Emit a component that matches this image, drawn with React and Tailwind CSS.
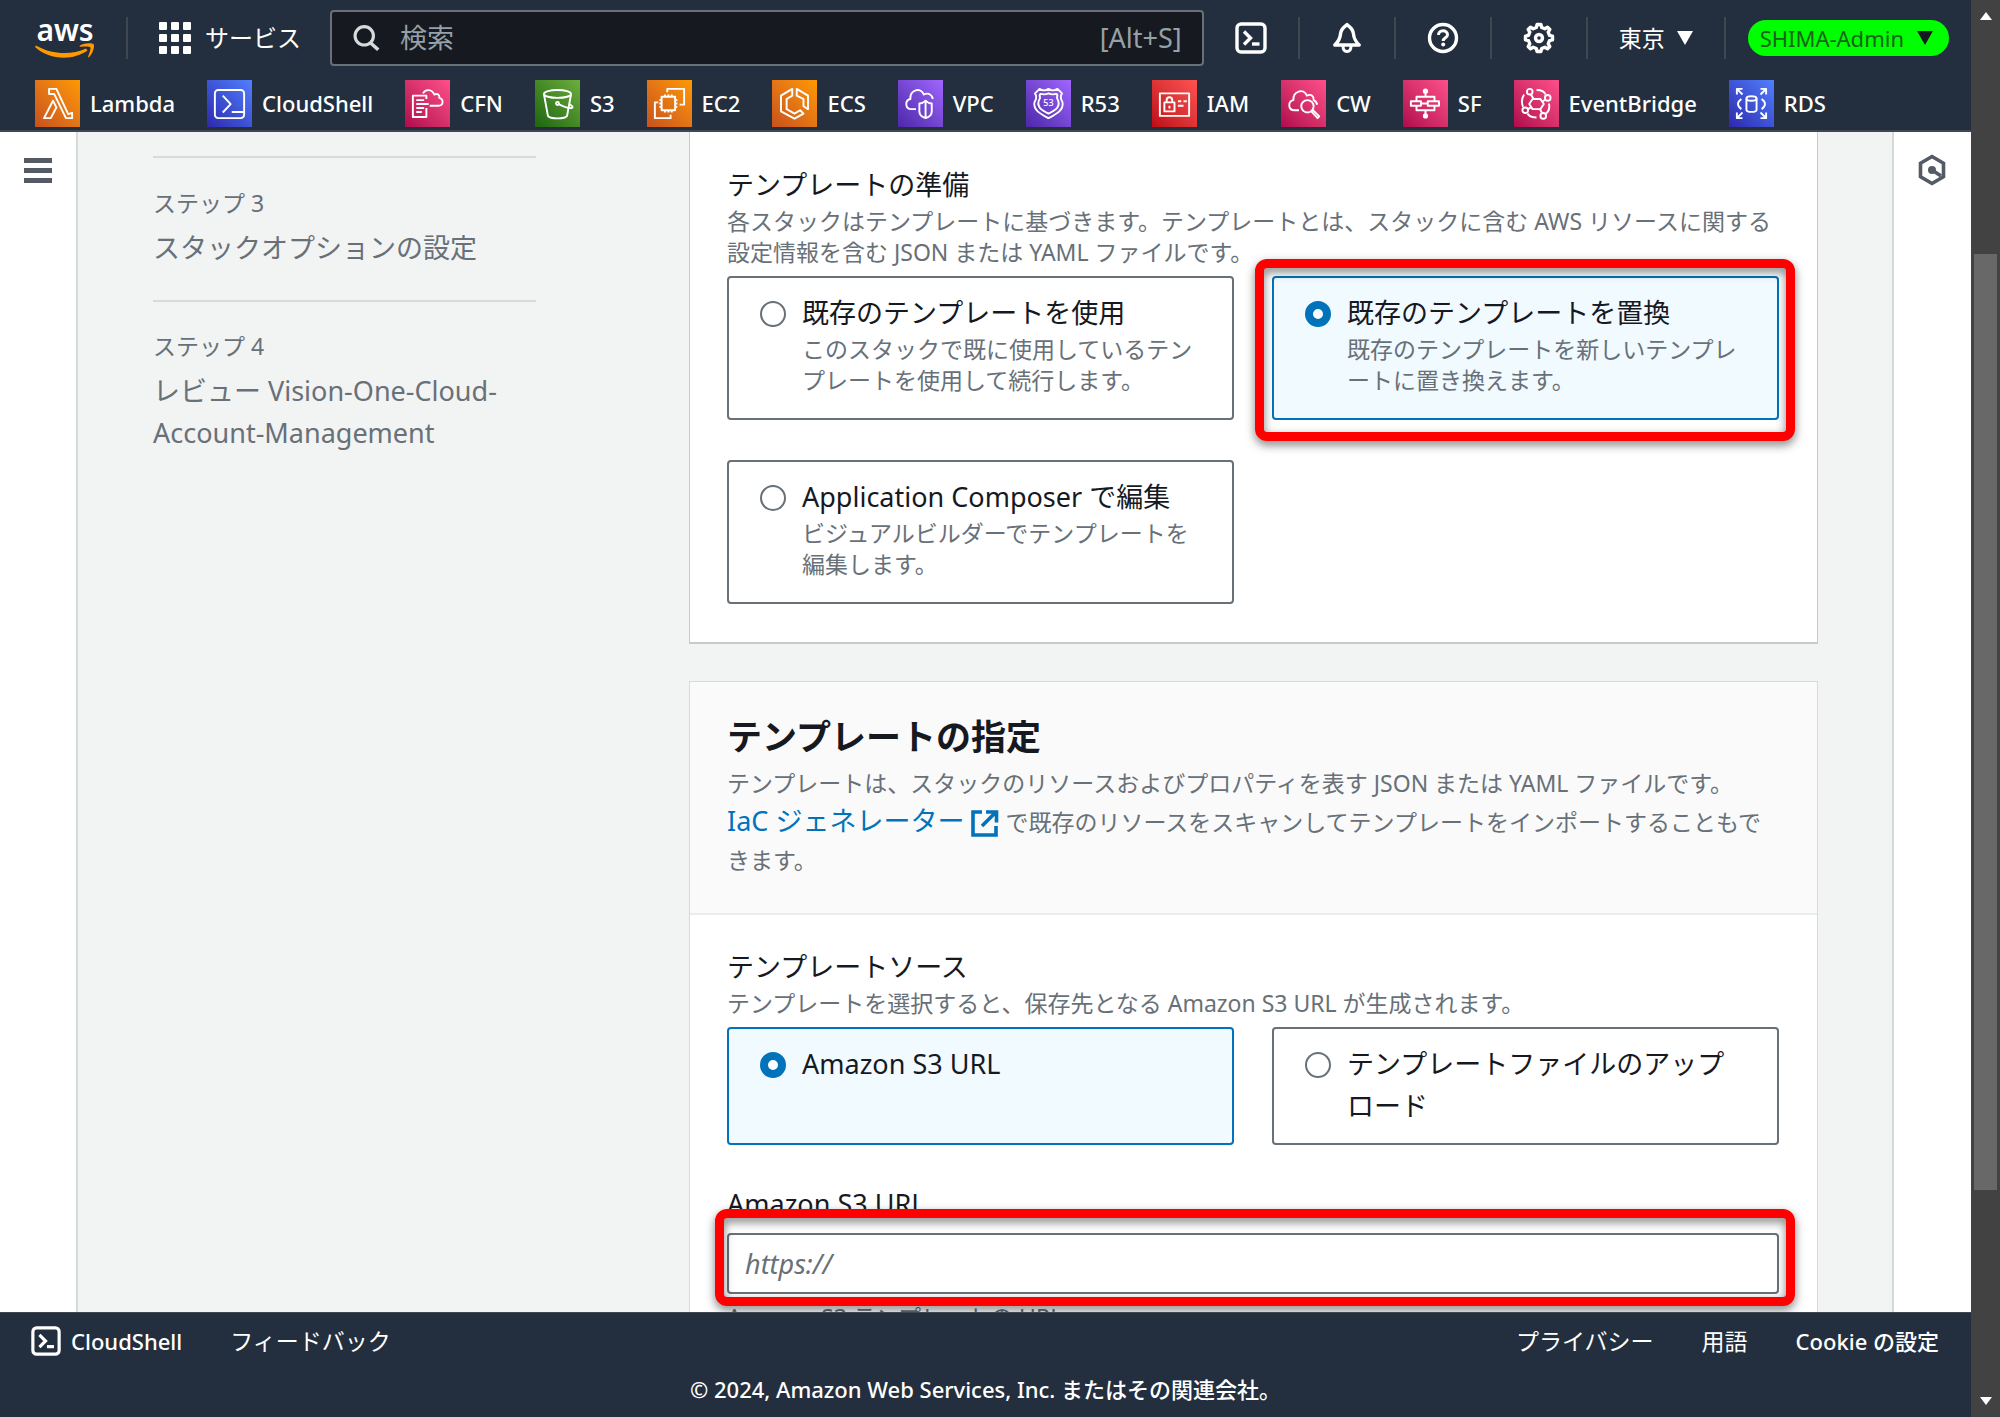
import React from "react";

const SvgIcon = ({ className, size = 16, children }) => (
  <svg
    viewBox={`0 0 ${size} ${size}`}
    className={className}
    fill="none"
    stroke="currentColor"
    aria-hidden="true"
  >
    {children}
  </svg>
);

const ShellIcon = ({ className }) => (
  <SvgIcon className={className} size={32}>
    <rect x="2" y="2" width="28" height="28" rx="4" strokeWidth="3.4" />
    <path d="M9 9.5l6.5 6.5L9 22.5" strokeWidth="3.4" />
    <path d="M17 22h7.5" strokeWidth="3.4" />
  </SvgIcon>
);

const BellIcon = () => (
  <SvgIcon className="w-8 h-8" size={32}>
    <path
      d="M16 2.5C14.5 4.5 10 6 9.5 12c-.3 4.500-1.500 7-5.700 11h24.400c-4.200-4-5.400-6.500-5.700-11C22 6 17.500 4.500 16 2.500z"
      strokeWidth="3.4"
      strokeLinejoin="round"
    />
    <path d="M12 24c0 3.500 1.500 5.500 4 5.500s4-2 4-5.500" strokeWidth="3" />
  </SvgIcon>
);

const HelpIcon = () => (
  <SvgIcon className="w-8 h-8" size={32}>
    <circle cx="16" cy="16" r="13.500" strokeWidth="3.4" />
    <path
      d="M11.500 13c0-2.700 2-4.300 4.500-4.300s4.500 1.600 4.500 4c0 3.300-4.300 3-4.300 6.300"
      strokeWidth="3"
    />
    <circle cx="16.200" cy="22.500" r="2" fill="currentColor" stroke="none" />
  </SvgIcon>
);

const GearIcon = () => (
  <SvgIcon className="w-8 h-8" size={32}>
    <path
      d="M13.300 5.500l.8-3h3.800l.8 3 3.100 1.300 2.700-1.600 2.300 2.300-1.600 2.700 1.300 3.100 3 .8v3.800l-3 .8-1.300 3.100 1.600 2.700-2.300 2.300-2.700-1.600-3.100 1.300-.8 3h-3.800l-.8-3-3.100-1.300-2.700 1.600-2.300-2.300 1.600-2.700-1.300-3.100-3-.8v-3.800l3-.8 1.300-3.100-1.600-2.700 2.300-2.300 2.700 1.600z"
      strokeWidth="3.4"
      strokeLinejoin="round"
    />
    <circle cx="16" cy="16" r="3.500" strokeWidth="3.4" />
  </SvgIcon>
);

const SearchIcon = () => (
  <SvgIcon className="w-7 h-8 shrink-0 text-[#d5dbdb]" size={32}>
    <circle cx="14" cy="13.500" r="10.500" strokeWidth="3.600" />
    <path d="M21 21.500l9 8" strokeWidth="4" />
  </SvgIcon>
);

const GridIcon = () => (
  <svg viewBox="0 0 32 32" className="w-8 h-8" fill="currentColor" aria-hidden="true">
    {[0, 12, 24].map((y) =>
      [0, 12, 24].map((x) => (
        <rect key={`${x}-${y}`} x={x} y={y} width="8" height="8" rx="1" />
      ))
    )}
  </svg>
);

const services = [
  {
    label: "Lambda",
    color: "from-[#c8511b] to-[#ff9900]",
    icon: (
      <path d="M14 33H8l8-15.500 3 6zM12.500 7H19l10.500 22.500L33 28.300V33h-5.500L17 11.500h-4.500z" />
    )
  },
  {
    label: "CloudShell",
    color: "from-[#2e27ad] to-[#527fff]",
    icon: (
      <>
        <rect x="7" y="8" width="26" height="25" rx="3" />
        <path d="M14 13l7 7.500-7 7.500M22 27.500h11" />
      </>
    )
  },
  {
    label: "CFN",
    color: "from-[#b0084d] to-[#ff4f8b]",
    icon: (
      <>
        <path d="M19 16V13H7v19h12v-8" />
        <path d="M10 17h7M10 20.500h11M10 24h7M10 27.500h5" />
        <path d="M16 11c2-4 8-4 10 1 3-1 5 0 4.500 3 4 1 4 7-1 7H22" />
      </>
    )
  },
  {
    label: "S3",
    color: "from-[#1b660f] to-[#6cae3e]",
    icon: (
      <>
        <ellipse cx="20" cy="11.500" rx="12" ry="3.500" />
        <path d="M8 12l3.500 19c2 3 15 3 17 0l3.500-19" />
        <circle cx="20" cy="20" r="1.300" />
        <path d="M21 20.500c5 2.500 10 4 12 3.300 1-.7-.5-2-2.500-3.300" />
      </>
    )
  },
  {
    label: "EC2",
    color: "from-[#c8511b] to-[#ff9900]",
    icon: (
      <>
        <rect x="13" y="14" width="12" height="12" />
        <path d="M16 14v-2M19 14v-2M22 14v-2M16 28v-2M19 28v-2M22 28v-2M13 17h-2M13 20h-2M13 23h-2M27 17h-2M27 20h-2M27 23h-2" />
        <path d="M18 10V7h15v14h-4M10 19H7v14h14v-3" />
      </>
    )
  },
  {
    label: "ECS",
    color: "from-[#c8511b] to-[#ff9900]",
    icon: (
      <>
        <path d="M18 7L8 13v14l12 6.500 8-4.500-3-3-5 3-7-4V16l5-3z" />
        <path d="M22 7l10 6v12l-4-2.500V16l-6-3z" />
      </>
    )
  },
  {
    label: "VPC",
    color: "from-[#4d27a8] to-[#a166ff]",
    icon: (
      <>
        <path d="M16 25h-4c-6 0-6-8-1-9-.5-8 9-11 12-4 4-2 7 0 8 4" />
        <path d="M19 20c3 0 4-1 5.500-2.500C26 19 27.500 20 30 20v7c0 3-2.500 5-5.500 6-3-1-5.500-3-5.500-6zM24.500 18v15" />
      </>
    )
  },
  {
    label: "R53",
    color: "from-[#4d27a8] to-[#a166ff]",
    icon: (
      <>
        <path d="M20 7c-3 2-5 2-8 0l-4 4c2 3 1 5-.5 8-1 7 5 10 12.500 14 7.500-4 13.500-7 12.500-14-1.500-3-2.500-5-.5-8l-4-4c-3 2-5 2-8 0z" />
        <path d="M20 11c-2 1-5 1-7 .5-1 .5-1 2-.5 3.500C8 23 14 26 20 29c6-3 12-6 7.500-14 .5-1.500.5-3-.5-3.500-2 .5-5 .5-7-.5z" />
        <text
          x="20"
          y="22.500"
          textAnchor="middle"
          stroke="none"
          fill="currentColor"
          fontSize="8"
          fontFamily="Noto Sans, sans-serif"
        >
          53
        </text>
      </>
    )
  },
  {
    label: "IAM",
    color: "from-[#bd0816] to-[#ff5252]",
    icon: (
      <>
        <rect x="7" y="11" width="26" height="20" />
        <rect x="11" y="19" width="9" height="8" />
        <path d="M13 19v-2c0-3.500 5-3.500 5 0v2M15.500 22v2.500M23 18h3M28 18h3M23 22h5" />
      </>
    )
  },
  {
    label: "CW",
    color: "from-[#b0084d] to-[#ff4f8b]",
    icon: (
      <>
        <path d="M16 26h-4c-6 0-6-8-1-9-.5-8 9-11 12-4 4-2 6.500 1 6 4 2 1 3 2 3 4" />
        <circle cx="23.500" cy="22.500" r="5.500" />
        <path d="M27 27l5.500 6 1.500-1.500-6-6" />
      </>
    )
  },
  {
    label: "SF",
    color: "from-[#b0084d] to-[#ff4f8b]",
    icon: (
      <>
        <circle cx="20" cy="9" r="1.500" fill="currentColor" />
        <circle cx="20" cy="31" r="1.500" fill="currentColor" />
        <rect x="7" y="18" width="9" height="4" />
        <rect x="22" y="18" width="10" height="4" />
        <path d="M20 11v3M12 18v-4h16v4M12 22v4h16v-4M20 26v4M16 20h6" />
      </>
    )
  },
  {
    label: "EventBridge",
    color: "from-[#b0084d] to-[#ff4f8b]",
    icon: (
      <>
        <path d="M16.500 16h7l3 4.500-3 4.500h-7l-3-4.500z" />
        <circle cx="14" cy="9.500" r="2.500" />
        <circle cx="30" cy="15" r="2.500" />
        <circle cx="10" cy="26" r="2.500" />
        <circle cx="26" cy="31" r="2.500" />
        <path d="M15 12l2.500 4M28 16.500L25 18.500M12.500 25l2.500-1.500M25 28.500L23 25M20 8c4 0 7 1 8 4M9 12c-2 3-2.500 7-1 11M12 29c2 3 5 3.500 8 3.500M31 20c1 4 0 7-2.500 9" />
      </>
    )
  },
  {
    label: "RDS",
    color: "from-[#2e27ad] to-[#527fff]",
    icon: (
      <>
        <ellipse cx="20" cy="15.500" rx="4.500" ry="2" />
        <path d="M15.500 15.500v10c0 2.600 9 2.600 9 0v-10" />
        <path d="M7 12V7h5M7 7l5 5M28 7h5v5M33 7l-5 5M7 28v5h5M7 33l5-5M28 33h5v-5M33 33l-5-5" />
        <path d="M11 16c-4 3-4 6 0 9M29 16c4 3 4 6 0 9" />
      </>
    )
  }
];

const Divider = () => <div className="w-[2px] h-[42px] bg-[#414750]" />;

const TopBar = () => (
  <header className="bg-[#232f3e] text-white border-b-2 border-[#414750] shrink-0">
    <div className="flex items-center h-[76px] pl-[35px] pr-[22px]">
      <a href="#home" className="w-[60px] flex flex-col items-center">
        <span className="text-[30px] leading-[26px] font-semibold">aws</span>
        <svg viewBox="0 0 60 16" className="w-[60px] h-4 text-[#ff9900]" fill="currentColor" aria-hidden="true">
          <path d="M1 2.500c16 9.500 36 9.500 50 3l1.500 2C38 18 14 17 0 4z" />
          <path d="M45 2.500c4-2.500 11-2.800 13.500-1.500 1.500 1.800-.5 9.500-4.500 13-1 .7-1.300.2-.8-.8C54.500 10 56 5.500 55.300 4.200c-1-1-5.500-.8-9.500-.4-1 .2-1.500-.6-.8-1.300z" />
        </svg>
      </a>
      <div className="mx-[31px]">
        <Divider />
      </div>
      <button className="flex items-center gap-[14px] text-[24px] leading-8">
        <GridIcon />
        サービス
      </button>
      <label className="ml-[29px] flex-1 h-14 flex items-center gap-5 px-5 rounded-sm border-2 border-[#687078] bg-[#16191f]">
        <SearchIcon />
        <input
          type="search"
          aria-label="検索"
          placeholder="検索"
          className="flex-1 min-w-0 bg-transparent outline-none text-[27px] placeholder:text-[#95a0a8]"
        />
        <span className="text-[27px] text-[#95a0a8]">[Alt+S]</span>
      </label>
      <div className="flex items-center gap-[31px] ml-[31px]">
        <button aria-label="CloudShell">
          <ShellIcon className="w-8 h-8" />
        </button>
        <Divider />
        <button aria-label="通知">
          <BellIcon />
        </button>
        <Divider />
        <button aria-label="ヘルプ">
          <HelpIcon />
        </button>
        <Divider />
        <button aria-label="設定">
          <GearIcon />
        </button>
        <Divider />
        <button className="flex items-center gap-3 text-[23px] leading-8">
          東京
          <svg viewBox="0 0 16 16" className="w-4 h-4" fill="currentColor" aria-hidden="true">
            <path d="M0 1h16L8 15z" />
          </svg>
        </button>
        <Divider />
      </div>
      <button className="flex items-center gap-[13px] ml-[22px] h-9 pl-3 pr-4 rounded-full bg-[#00ff00] text-[#16641a] text-[22px] leading-8">
        SHIMA-Admin
        <svg viewBox="0 0 16 16" className="w-4 h-4 text-[#16191f]" fill="currentColor" aria-hidden="true">
          <path d="M0 1h16L8 15z" />
        </svg>
      </button>
    </div>
    <nav className="flex items-center gap-8 pl-[35px] pt-1 pb-[3px] text-[22px] font-medium">
      {services.map((service) => (
        <a key={service.label} href={`#${service.label}`} className="flex items-center gap-[10px]">
          <span
            className={`w-[45px] h-[47px] flex items-center justify-center bg-gradient-to-tr ${service.color}`}
          >
            <SvgIcon className="w-[45px] h-[47px]" size={40}>
              <g strokeWidth="1.700" strokeLinejoin="round">{service.icon}</g>
            </SvgIcon>
          </span>
          {service.label}
        </a>
      ))}
    </nav>
  </header>
);

const Steps = () => (
  <aside className="w-[383px] shrink-0 pt-6 text-[#687078]">
    <ol>
      <li className="border-t-2 border-[#d5dbdb] pt-[30px] pb-[31px]">
        <div className="text-[23px] leading-[31px]">ステップ 3</div>
        <a href="#options" className="block mt-2 text-[27px] leading-[42px]">
          スタックオプションの設定
        </a>
      </li>
      <li className="border-t-2 border-[#d5dbdb] pt-[29px]">
        <div className="text-[23px] leading-[31px]">ステップ 4</div>
        <a href="#review" className="block mt-2 text-[27px] leading-[42px]">
          レビュー Vision-One-Cloud-
          <br />
          Account-Management
        </a>
      </li>
    </ol>
  </aside>
);

const Tile = ({ name, title, description, checked, highlighted }) => (
  <label
    className={`relative flex gap-4 rounded-sm border-2 pt-[14px] pb-4 pl-[31px] pr-8 ${
      checked ? "border-[#0073bb] bg-[#f1faff]" : "border-[#687078] bg-white"
    }`}
  >
    <input
      type="radio"
      name={name}
      defaultChecked={checked}
      className="appearance-none shrink-0 mt-[9px] w-[26px] h-[26px] rounded-full bg-white border-2 border-[#687078] checked:border-8 checked:border-[#0073bb]"
    />
    <span className="min-w-0">
      <span className="block text-[27px] leading-[42px]">{title}</span>
      {description && (
        <span className="block pb-[6px] text-[23px] leading-[31px] text-[#687078]">{description}</span>
      )}
    </span>
    {highlighted && (
      <span className="absolute -left-[19px] -right-[18px] -top-[19px] -bottom-[23px] rounded-xl border-[9px] border-[#ff0000] drop-shadow-[0_4px_5px_rgba(0,0,0,0.5)] pointer-events-none" />
    )}
  </label>
);

const PrepareCard = () => (
  <section className="bg-white border-x border-b-2 border-[#c4cbcc] pl-[37px] pr-[38px] pt-8 pb-[38px]">
    <h3 className="text-[27px] leading-[42px]">テンプレートの準備</h3>
    <p className="text-[23px] leading-[31px] text-[#687078]">
      各スタックはテンプレートに基づきます。テンプレートとは、スタックに含む AWS リソースに関する
      設定情報を含む JSON または YAML ファイルです。
    </p>
    <div className="grid grid-cols-2 gap-x-[38px] gap-y-10 mt-2">
      <Tile
        name="prepare"
        title="既存のテンプレートを使用"
        description="このスタックで既に使用しているテンプレートを使用して続行します。"
      />
      <Tile
        name="prepare"
        title="既存のテンプレートを置換"
        description="既存のテンプレートを新しいテンプレートに置き換えます。"
        checked
        highlighted
      />
      <Tile
        name="prepare"
        title="Application Composer で編集"
        description="ビジュアルビルダーでテンプレートを編集します。"
      />
    </div>
  </section>
);

const SpecifyCard = () => (
  <section className="bg-white border border-[#d5dbdb] mt-[37px]">
    <div className="bg-[#fafafa] border-b-2 border-[#eaeded] pl-[37px] pr-[38px] pt-[33px] pb-[34px]">
      <h2 className="text-[35px] leading-[44px] font-bold">テンプレートの指定</h2>
      <p className="mt-[5px] text-[23px] leading-[38px] text-[#687078]">
        テンプレートは、スタックのリソースおよびプロパティを表す JSON または YAML ファイルです。
        <br />
        <a href="#iac" className="text-[27px] leading-[38px] text-[#0073bb]">
          IaC ジェネレーター{" "}
          <SvgIcon className="inline w-7 h-7 align-[-6px]" size={28}>
            <path d="M11 3H2v23h23v-9" strokeWidth="3.600" />
            <path d="M15 3h10.500v10.500M25 3L11 17" strokeWidth="3.600" />
          </SvgIcon>
        </a>{" "}
        で既存のリソースをスキャンしてテンプレートをインポートすることもできます。
      </p>
    </div>
    <div className="pl-[37px] pr-[38px] pt-[31px] pb-10">
      <h3 className="text-[27px] leading-[42px]">テンプレートソース</h3>
      <p className="text-[23px] leading-[31px] text-[#687078]">
        テンプレートを選択すると、保存先となる Amazon S3 URL が生成されます。
      </p>
      <div className="grid grid-cols-2 gap-[38px] mt-2">
        <Tile name="source" title="Amazon S3 URL" checked />
        <Tile name="source" title="テンプレートファイルのアップロード" />
      </div>
      <label htmlFor="s3-url" className="block mt-[38px] text-[27px] leading-[42px]">
        Amazon S3 URL
      </label>
      <div className="relative mt-2">
        <input
          id="s3-url"
          type="url"
          placeholder="https://"
          className="block w-full h-[61px] px-4 rounded-sm border-2 border-[#687078] text-[27px] placeholder:italic placeholder:text-[#687078] outline-none"
        />
        <span className="absolute -left-3 -right-4 -top-6 -bottom-3 rounded-xl border-[9px] border-[#ff0000] drop-shadow-[0_4px_5px_rgba(0,0,0,0.5)] pointer-events-none" />
      </div>
      <p className="mt-2 text-[23px] leading-[31px] text-[#687078]">Amazon S3 テンプレートの URL</p>
    </div>
  </section>
);

const BottomBar = () => (
  <footer className="bg-[#232f3e] text-white shrink-0 border-t border-[#414750] pt-3 pb-3 text-[23px]">
    <div className="flex items-center justify-between pl-[31px] pr-8 leading-8">
      <div className="flex items-center gap-12">
        <button className="flex items-center gap-[10px] text-[22px] font-medium">
          <ShellIcon className="w-[30px] h-[30px]" />
          CloudShell
        </button>
        <a href="#feedback">フィードバック</a>
      </div>
      <div className="flex items-center gap-12">
        <a href="#privacy">プライバシー</a>
        <a href="#terms">用語</a>
        <button className="text-[22px] font-medium">Cookie の設定</button>
      </div>
    </div>
    <p className="mt-4 text-center text-[22px] leading-8 font-medium">
      © 2024, Amazon Web Services, Inc. またはその関連会社。
    </p>
  </footer>
);

const Scrollbar = () => (
  <div className="w-[29px] shrink-0 bg-[#424242] flex flex-col items-center py-3 text-white">
    <svg viewBox="0 0 12 8" className="w-3 h-2 shrink-0" fill="currentColor" aria-hidden="true">
      <path d="M6 0l6 8H0z" />
    </svg>
    <div className="flex-1 w-full flex flex-col items-center">
      <div className="basis-[17%]" />
      <div className="basis-[68%] w-[23px] bg-[#686868]" />
    </div>
    <svg viewBox="0 0 12 8" className="w-3 h-2 shrink-0" fill="currentColor" aria-hidden="true">
      <path d="M0 0h12L6 8z" />
    </svg>
  </div>
);

const App = () => {
  return (
    <div className="h-screen flex overflow-hidden text-[#16191f] font-['Noto_Sans','Noto_Sans_CJK_JP',sans-serif]">
      <div className="flex-1 min-w-0 flex flex-col">
        <TopBar />

        <div className="flex-1 min-h-0 flex overflow-hidden bg-[#f2f3f3]">
          {/* Navigation toggle */}
          <div className="w-[78px] shrink-0 bg-white border-r-2 border-[#d5dbdb] pt-6 pl-6">
            <button aria-label="ナビゲーションを開く" className="flex flex-col gap-[5px] w-7 py-[2px]">
              <span className="w-full h-[5px] bg-[#545b64]" />
              <span className="w-full h-[5px] bg-[#545b64]" />
              <span className="w-full h-[5px] bg-[#545b64]" />
            </button>
          </div>

          <div className="flex-1 min-w-0 flex gap-[153px] pl-[75px] pr-[74px]">
            <Steps />
            <main className="flex-1 min-w-0">
              <PrepareCard />
              <SpecifyCard />
            </main>
          </div>

          {/* Info panel toggle */}
          <div className="w-[79px] shrink-0 bg-white border-l-2 border-[#d5dbdb] pt-[22px] pl-[22px]">
            <button aria-label="情報" className="text-[#545b64]">
              <SvgIcon className="w-8 h-8" size={32}>
                <path d="M16 2.500l11.500 6.700v13.600L16 29.500 4.500 22.800V9.200z" strokeWidth="3.600" />
                <circle cx="16" cy="16" r="4" fill="currentColor" stroke="none" />
                <path d="M16 16l9 6" strokeWidth="3.600" />
              </SvgIcon>
            </button>
          </div>
        </div>

        <BottomBar />
      </div>
      <Scrollbar />
    </div>
  );
};

export default App;
